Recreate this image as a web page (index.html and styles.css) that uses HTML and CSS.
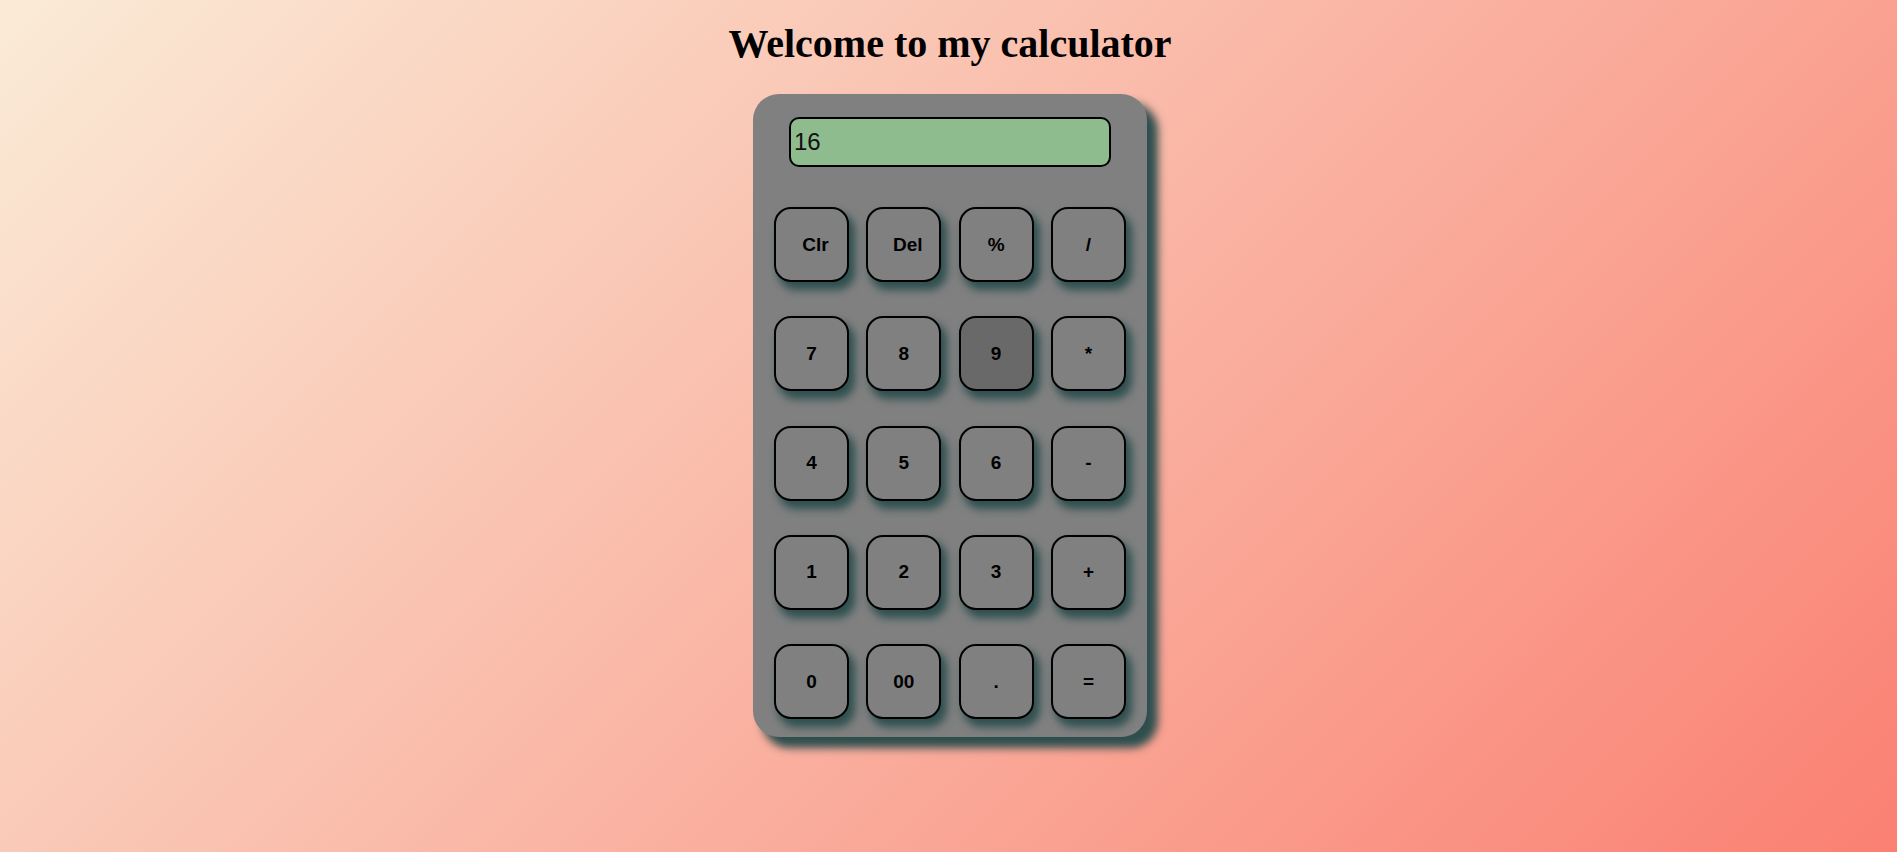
FILE: index.html
```html
<!DOCTYPE html>
<html lang="en">
<head>
<meta charset="utf-8">
<title>Calculator</title>
<link rel="stylesheet" href="styles.css">
</head>
<body>
  <h1 class="title">Welcome to my calculator</h1>
  <div class="calculator">
    <div class="display">16</div>
    <div class="keys">
      <button class="key key-word">Clr</button>
      <button class="key key-word">Del</button>
      <button class="key">%</button>
      <button class="key">/</button>
      <button class="key">7</button>
      <button class="key">8</button>
      <button class="key key-active">9</button>
      <button class="key">*</button>
      <button class="key">4</button>
      <button class="key">5</button>
      <button class="key">6</button>
      <button class="key">-</button>
      <button class="key">1</button>
      <button class="key">2</button>
      <button class="key">3</button>
      <button class="key">+</button>
      <button class="key">0</button>
      <button class="key">00</button>
      <button class="key">.</button>
      <button class="key">=</button>
    </div>
  </div>
</body>
</html>
```
FILE: styles.css
```css
html {
  min-height: 100%;
}

body {
  margin: 0;
  padding: 0 0 0 3px;
  min-height: 100vh;
  box-sizing: border-box;
  background: linear-gradient(135deg, #faebd7, #fa8072);
  font-family: "Liberation Sans", Arial, sans-serif;
}

.title {
  margin: 21px 0 27px;
  text-align: center;
  font-family: "Liberation Serif", "Times New Roman", serif;
  font-weight: bold;
  font-size: 40px;
  line-height: 46px;
  color: #000;
}

.calculator {
  width: 394px;
  margin: 0 auto;
  box-sizing: border-box;
  padding: 23px 0 18px;
  background: #808080;
  border-radius: 26px;
  box-shadow: 10px 10px 8px 1px #2f4f4f;
  display: flex;
  flex-direction: column;
  align-items: center;
}

.display {
  width: 322px;
  height: 50px;
  box-sizing: border-box;
  border: 2px solid #000;
  border-radius: 10px;
  background: #8fbc8f;
  padding-left: 3px;
  display: flex;
  align-items: center;
  font-family: "Liberation Sans", Arial, sans-serif;
  font-size: 24px;
  color: #111;
}

.keys {
  margin-top: 40px;
  display: grid;
  grid-template-columns: repeat(4, 75px);
  grid-auto-rows: 75px;
  column-gap: 17.33px;
  row-gap: 34.25px;
}

.key {
  width: 75px;
  height: 75px;
  box-sizing: border-box;
  margin: 0;
  padding: 0;
  border: 2px solid #000;
  border-radius: 17px;
  background: #808080;
  box-shadow: 5px 7px 8px 1px #2f4f4f;
  display: flex;
  align-items: center;
  justify-content: center;
  font-family: "Liberation Sans", Arial, sans-serif;
  font-weight: bold;
  font-size: 19px;
  color: #000;
}

.key-word {
  padding-left: 8px;
}

.key-active {
  background: #696969;
}
```
